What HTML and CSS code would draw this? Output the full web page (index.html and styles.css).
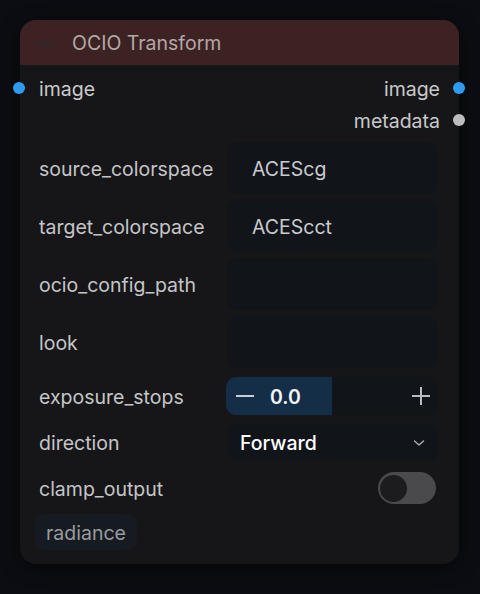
FILE: index.html
```html
<!DOCTYPE html>
<html>
<head>
<meta charset="utf-8">
<link rel="stylesheet" href="styles.css">
</head>
<body>
<div class="node">
  <div class="header">
    <svg class="collapse" width="16" height="10" viewBox="0 0 16 10"><path d="M3 3 L8 7 L13 3" fill="none" stroke="#2b2a33" stroke-width="1.8" stroke-linecap="round" stroke-linejoin="round"/></svg>
    <span class="title">OCIO Transform</span>
  </div>
  <div class="body">
    <div class="ports">
      <div class="port-row">
        <span class="port in"><span class="dot blue"></span>image</span>
        <span class="port out">image<span class="dot blue"></span></span>
      </div>
      <div class="port-row end">
        <span class="port out">metadata<span class="dot gray"></span></span>
      </div>
    </div>
    <div class="field"><span class="label">source_colorspace</span><div class="box">ACEScg</div></div>
    <div class="field"><span class="label">target_colorspace</span><div class="box">ACEScct</div></div>
    <div class="field"><span class="label">ocio_config_path</span><div class="box"></div></div>
    <div class="field"><span class="label">look</span><div class="box"></div></div>
    <div class="field short stepper-row"><span class="label">exposure_stops</span>
      <div class="stepper">
        <div class="fill" style="width: 50%"></div>
        <svg class="minus" width="20" height="20" viewBox="0 0 20 20"><path d="M1 10 H19" stroke="#c9ccd2" stroke-width="2"/></svg>
        <span class="num">0.0</span>
        <svg class="plus" width="20" height="20" viewBox="0 0 20 20"><path d="M1 10 H19 M10 1 V19" stroke="#b9bcc2" stroke-width="2"/></svg>
      </div>
    </div>
    <div class="field short select-row"><span class="label">direction</span>
      <div class="select"><span>Forward</span>
        <svg width="12" height="8" viewBox="0 0 12 8"><path d="M1.5 2 L6 6 L10.5 2" fill="none" stroke="#a9abb0" stroke-width="1.5" stroke-linecap="round" stroke-linejoin="round"/></svg>
      </div>
    </div>
    <div class="field short toggle-row"><span class="label">clamp_output</span>
      <div class="toggle"><span class="knob"></span></div>
    </div>
    <div class="tags"><span class="tag">radiance</span></div>
  </div>
</div>
</body>
</html>
```
FILE: styles.css
```css
html, body { margin: 0; padding: 0; }
body {
  width: 480px;
  height: 594px;
  background: #0b0d12;
  font-family: Inter, "Noto Sans", sans-serif;
  font-size: 19.5px;
  line-height: 24px;
  color: #c7c7c9;
  overflow: hidden;
  padding: 20px 0 0 20px;
  box-sizing: border-box;
}
.node {
  width: 439px;
  height: 544px;
  background: #161619;
  border-radius: 16px;
  box-shadow: 0 4px 18px rgba(0,0,0,0.5);
  display: flex;
  flex-direction: column;
}
.header {
  height: 45px;
  flex: none;
  background: #3d2223;
  border-radius: 16px 16px 0 0;
  display: flex;
  align-items: center;
  padding-left: 17px;
  box-sizing: border-box;
}
.collapse { margin-top: 1px; }
.title {
  margin-left: 19px;
  color: #b3a8a6;
}
.body {
  padding: 7px 21px 16px 19px;
  display: flex;
  flex-direction: column;
  gap: 6px;
}
.ports { display: flex; flex-direction: column; }
.port-row {
  height: 32px;
  display: flex;
  justify-content: space-between;
  align-items: center;
  position: relative;
}
.port-row.end { justify-content: flex-end; }
.port { display: flex; align-items: center; color: #c9c9cb; padding-top: 1px; }
.port.out { margin-right: -2px; }
.dot {
  position: absolute;
  width: 12px;
  height: 12px;
  border-radius: 50%;
  top: 10px;
}
.port.in .dot { left: -26px; }
.port.out .dot { right: -27px; }
.blue { background: #2f9bef; }
.gray { background: #bdbdbf; }
.field {
  height: 52px;
  flex: none;
  display: flex;
  align-items: center;
  justify-content: space-between;
}
.label { color: #c5c5c7; padding-top: 2px; }
.box {
  width: 211px;
  height: 52px;
  box-sizing: border-box;
  background: #111419;
  border-radius: 10px;
  padding-left: 25px;
  padding-top: 2px;
  display: flex;
  align-items: center;
  color: #c9cbcf;
}
.field.short { height: 38px; }
.stepper-row { margin-top: 3px; }
.stepper {
  width: 212px;
  height: 38px;
  margin-left: -1px;
  background: #111419;
  border-radius: 10px;
  position: relative;
  overflow: hidden;
  display: flex;
  align-items: center;
}
.stepper .fill {
  position: absolute;
  left: 0; top: 0; bottom: 0;
  background: #132e46;
}
.stepper .minus { position: relative; margin-left: 9px; }
.stepper .num {
  position: relative;
  margin-left: 15px;
  color: #f2f4f6;
  font-weight: 600;
  padding-top: 1px;
}
.stepper .plus { margin-left: auto; margin-right: 7px; }
.select-row { margin-top: 2px; height: 37px; }
.select {
  width: 210px;
  height: 37px;
  box-sizing: border-box;
  background: #111419;
  border-radius: 10px;
  display: flex;
  align-items: center;
  justify-content: space-between;
  padding: 1px 13px 0 12px;
  color: #ffffff;
  font-weight: 500;
}
.toggle-row { margin-top: 2px; }
.toggle {
  width: 58px;
  height: 32px;
  margin-right: 2px;
  background: #4a4a4d;
  border-radius: 16px;
  display: flex;
  align-items: center;
  padding-left: 2px;
  box-sizing: border-box;
}
.knob {
  width: 27px;
  height: 27px;
  border-radius: 50%;
  background: #1c1c1f;
}
.tags { display: flex; margin-top: 1px; margin-left: -4px; }
.tag {
  height: 36px;
  padding: 1px 11px 0;
  box-sizing: border-box;
  background: #161b22;
  border-radius: 10px;
  display: flex;
  align-items: center;
  color: #9a9b9e;
}
```
